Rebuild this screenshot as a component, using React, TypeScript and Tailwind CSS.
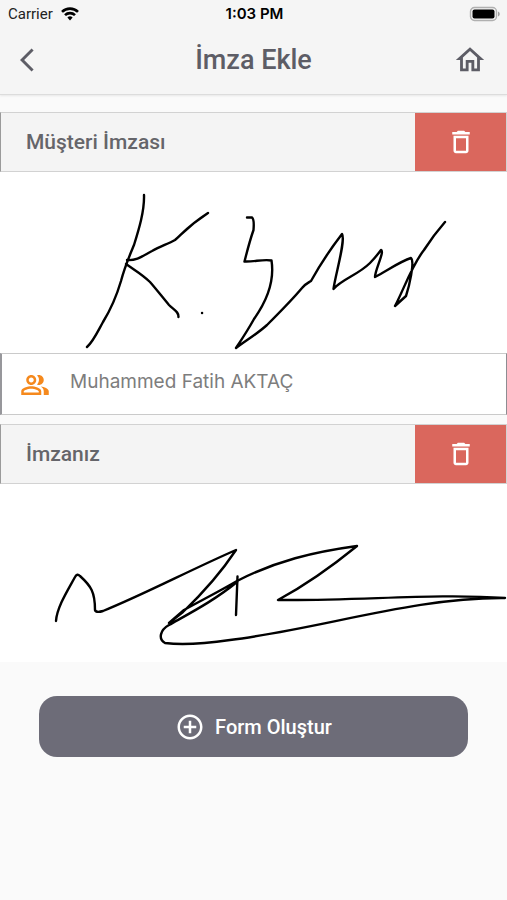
import type { ReactNode } from "react";
import {
  MdAddCircleOutline,
  MdArrowBackIos,
  MdDeleteOutline,
  MdOutlineHome,
  MdOutlinePeopleAlt,
} from "react-icons/md";

function StatusBar() {
  return (
    <div className="grid h-7 grid-cols-3 items-center pl-2 pr-1.5 text-black">
      <div className="flex items-center gap-2">
        <span className="text-[15px] leading-5 text-[#222]">Carrier</span>
        <svg viewBox="0 0 18 14" className="h-3.5 w-[18px]" fill="none" stroke="currentColor" strokeWidth="2.6">
          <path d="M1 4.9C5.4.5 12.6.5 17 4.9" />
          <path d="M4 8.2c2.8-2.8 7.2-2.8 10 0" />
          <path d="M6.4 10.6a3.7 3.7 0 0 1 5.2 0L9 13.4Z" fill="currentColor" stroke="none" />
        </svg>
      </div>
      <span className="text-center font-['Inter'] text-[15px] leading-5 font-semibold">1:03 PM</span>
      <svg viewBox="0 0 32 16" className="h-4 w-8 justify-self-end">
        <rect x="1.5" y="1.5" width="26" height="13" rx="4" fill="#f4f4f4" stroke="#b0b0b0" strokeWidth="1.4" />
        <rect x="3.5" y="3.5" width="22" height="9" rx="2" fill="#000" />
        <path d="M29 5.5c2.3.8 2.3 4.2 0 5z" fill="#a0a0a0" />
      </svg>
    </div>
  );
}

function Header() {
  return (
    <header className="border-b border-[#dcdcdc] bg-[#f5f5f5] shadow-[0_1px_2px_rgba(0,0,0,0.08)]">
      <StatusBar />
      <div className="grid h-[66px] grid-cols-[1fr_auto_1fr] items-center px-5 pb-0.5 text-[#5d5d66]">
        <button type="button" aria-label="Geri" className="justify-self-start">
          <MdArrowBackIos size={28} />
        </button>
        <h1 className="text-[27px] leading-8 font-medium">İmza Ekle</h1>
        <button type="button" aria-label="Ana sayfa" className="justify-self-end">
          <MdOutlineHome size={34} />
        </button>
      </div>
    </header>
  );
}

function SignatureTitle({ title }: { title: string }) {
  return (
    <div className="flex h-15 border border-[#d2d2d2] border-l-[#9a9a9a] bg-[#f4f4f4]">
      <h2 className="flex flex-1 items-center pt-0.5 pl-[25px] text-[21px] font-medium text-[#65656a]">{title}</h2>
      <button
        type="button"
        aria-label={`${title} sil`}
        className="flex w-[91px] items-center justify-center bg-[#da675d] text-white"
      >
        <MdDeleteOutline size={30} />
      </button>
    </div>
  );
}

function Signature({ viewBox, label, children }: { viewBox: string; label: string; children: ReactNode }) {
  return (
    <svg
      viewBox={viewBox}
      role="img"
      aria-label={label}
      className="block w-full bg-white"
      fill="none"
      stroke="#000"
      strokeWidth="2.4"
      strokeLinecap="round"
      strokeLinejoin="round"
    >
      {children}
    </svg>
  );
}

export default function App() {
  return (
    <div className="min-h-screen bg-[#fafafa] font-['Roboto',sans-serif]">
      <Header />
      <main className="pt-[17px]">
        <section>
          <SignatureTitle title="Müşteri İmzası" />
          <Signature viewBox="0 172 507 181" label="Müşteri imzası">
            <path d="M144 195C144.500 211 139 229 134 245C129 257 125 266 121 281C116 298 111 309 103 322C98 331 93 342 87 347" />
            <path d="M127 260C137 261 144 255 152 251C161 246 168 244 175 240C183 233 188 226 208 213" />
            <path d="M126 264C136 271 143 275 150 282C157 290 163 298 169 305C174 310 179 312 178.500 317" />
            <path d="M202 313h.1" />
            <path d="M247 217.500h5C254 219 254 224 253.500 230C249 243 247 252 244.500 261.500C254 262 263 259 271.500 260.500C275 283 264 305 254 319C248 330 242 339 236 348C248 339 257 334 267 325C280 312 292 300 302 288C305 284 308 283 311 281C321 263 332 247 342 234C346 240 335 276 333.500 289C342 279 358 275 370 263C375 258 378 254 381 250C385 251 375 270 375 277C388 270 401 261 411 258C415 262 409 287 406 296L395 306C404 289 412 265 424 250C431 239 438 230 445 222" />
          </Signature>
        </section>

        <div className="flex h-[62px] border-y border-r border-l-2 border-[#cacaca] border-r-[#8d8d92] border-l-[#97979b] bg-white pl-[18px]">
          <MdOutlinePeopleAlt size={30} className="mt-4 text-[#f5891d]" />
          <p className="ml-5 pt-3 font-['Inter'] text-[19px] leading-8 text-[#7d7d7d]">Muhammed Fatih AKTAÇ</p>
        </div>

        <section className="mt-[9px]">
          <SignatureTitle title="İmzanız" />
          <Signature viewBox="0 484 507 178" label="İmzanız">
            <path d="M56 621C57 607 68 590 75 577Q77 573 80 576C91 586 95 592 95 610Q96 613 103 611C145 594 190 570 236 550C222 571 204 592 183 612L169 623L184 610C202 600 220 591 237 581C276 561 313 552 357 546C330 568 304 586 278 600C360 601 435 593 505 598C415 597 320 629 230 640C202 644 182 645 165 643C158 639 160 630 169 625C192 612 215 600 237 582" />
            <path d="M237.500 576.500L236 615" />
          </Signature>
        </section>

        <div className="px-[39px] pt-[34px]">
          <button
            type="button"
            className="flex h-[61px] w-full items-center justify-center gap-2.5 rounded-[18px] bg-[#6d6c78] text-xl font-medium text-white"
          >
            <MdAddCircleOutline size={30} />
            Form Oluştur
          </button>
        </div>
      </main>
    </div>
  );
}
